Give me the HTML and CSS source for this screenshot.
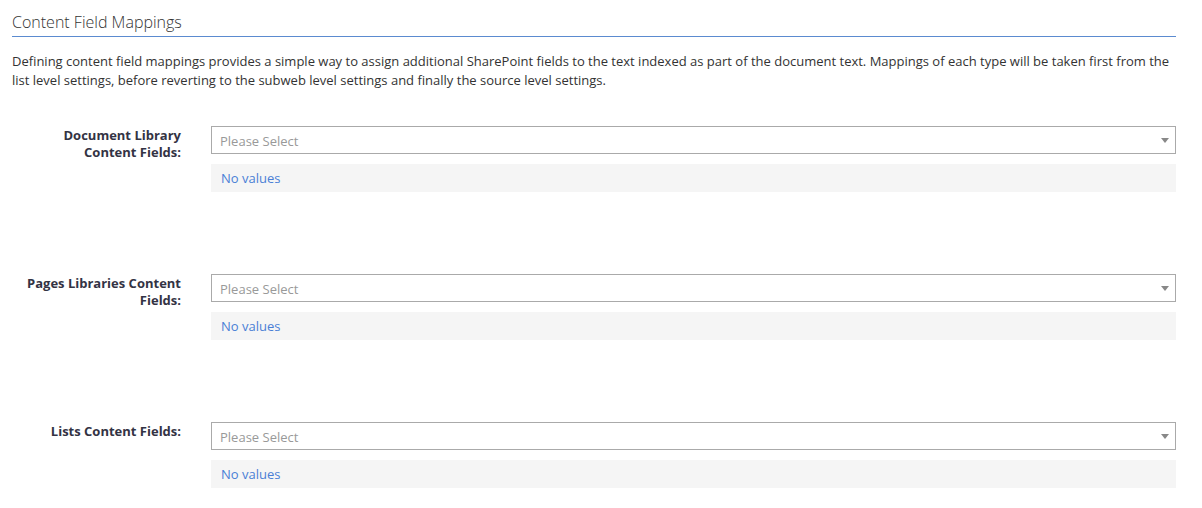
FILE: index.html
```html
<!DOCTYPE html>
<html>
<head>
<meta charset="utf-8">
<link rel="stylesheet" href="styles.css">
</head>
<body>
<div class="page">
  <h2 class="title">Content Field Mappings</h2>
  <p class="desc">Defining content field mappings provides a simple way to assign additional SharePoint fields to the text indexed as part of the document text. Mappings of each type will be taken first from the list level settings, before reverting to the subweb level settings and finally the source level settings.</p>

  <div class="row">
    <label class="label">Document Library Content Fields:</label>
    <div class="field">
      <div class="select"><span class="placeholder">Please Select</span><span class="caret"></span></div>
      <div class="values">No values</div>
    </div>
  </div>

  <div class="row">
    <label class="label">Pages Libraries Content Fields:</label>
    <div class="field">
      <div class="select"><span class="placeholder">Please Select</span><span class="caret"></span></div>
      <div class="values">No values</div>
    </div>
  </div>

  <div class="row">
    <label class="label">Lists Content Fields:</label>
    <div class="field">
      <div class="select"><span class="placeholder">Please Select</span><span class="caret"></span></div>
      <div class="values">No values</div>
    </div>
  </div>
</div>
</body>
</html>
```

FILE: styles.css
```css
html, body {
  margin: 0;
  padding: 0;
  background: #fff;
}
body {
  font-family: "Open Sans", "Liberation Sans", sans-serif;
  color: #333;
}
.page {
  padding: 0 26px 0 12px;
}
.title {
  margin: 0;
  padding-top: 10px;
  font-size: 16px;
  font-weight: 300;
  line-height: 24px;
  color: #333;
  padding-bottom: 2px;
  border-bottom: 1px solid #5b8bd0;
}
.desc {
  margin: 15px 0 0 0;
  font-size: 13px;
  line-height: 19px;
  color: #333;
}
.row {
  display: grid;
  grid-template-columns: 169px 1fr;
  column-gap: 30px;
  margin-top: 36px;
}
.row + .row {
  margin-top: 82px;
}
.label {
  text-align: right;
  font-weight: 700;
  font-size: 13px;
  line-height: 17px;
  color: #333344;
  padding-top: 1px;
}
.select {
  height: 28px;
  box-sizing: border-box;
  border: 1px solid #aaa;
  display: flex;
  align-items: center;
  justify-content: space-between;
  padding: 1px 6px 0 8px;
  background: #fff;
}
.placeholder {
  font-size: 13px;
  color: #999;
}
.caret {
  width: 0;
  height: 0;
  border-left: 4px solid transparent;
  border-right: 4px solid transparent;
  border-top: 5px solid #888;
}
.values {
  margin-top: 10px;
  height: 28px;
  background: #f5f5f5;
  display: flex;
  align-items: center;
  padding-left: 10px;
  font-size: 13px;
  color: #4a7fd6;
}
```
